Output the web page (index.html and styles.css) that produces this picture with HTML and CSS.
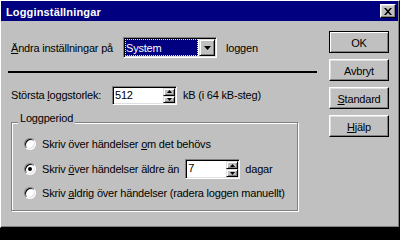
FILE: index.html
```html
<!DOCTYPE html>
<html lang="sv">
<head>
<meta charset="utf-8">
<title>Logginställningar</title>
<link rel="stylesheet" href="styles.css">
</head>
<body>
<div class="window">
  <div class="titlebar">
    <span class="title">Logginställningar</span>
    <span class="close"><svg width="8" height="7" viewBox="0 0 8 7"><path d="M0 0h2l2 2.3 2-2.3h2L5 3.5 8 7H6L4 4.7 2 7H0l3-3.5z"/></svg></span>
  </div>
  <div class="content">
    <div class="main">
      <div class="row">
        <span class="lbl lbl-log"><u>Ä</u>ndra inställningar på</span>
        <div class="combo">
          <div class="combo-value"><span>System</span></div>
          <div class="combo-btn"><svg width="7" height="4" viewBox="0 0 7 4"><path d="M0 0h7L3.5 4z"/></svg></div>
        </div>
        <span class="after after-log">loggen</span>
      </div>
      <div class="sep"></div>
      <div class="row">
        <span class="lbl lbl-size">Största <u>l</u>oggstorlek:</span>
        <div class="spin spin-size">
          <span class="spin-value">512</span>
          <div class="spin-btns">
            <span class="spin-btn"><svg width="5" height="3" viewBox="0 0 5 3"><path d="M2.5 0L5 3H0z"/></svg></span>
            <span class="spin-btn"><svg width="5" height="3" viewBox="0 0 5 3"><path d="M0 0h5L2.5 3z"/></svg></span>
          </div>
        </div>
        <span class="after after-size">kB (i 64 kB-steg)</span>
      </div>
      <fieldset class="group">
        <legend>Loggperiod</legend>
        <div class="opt"><span class="radio"></span><span>Skriv över händelser <u>o</u>m det behövs</span></div>
        <div class="opt opt-days">
          <span class="radio checked"></span><span>Skriv <u>ö</u>ver händelser äldre än</span>
          <div class="spin spin-days">
            <span class="spin-value">7</span>
            <div class="spin-btns">
              <span class="spin-btn"><svg width="5" height="3" viewBox="0 0 5 3"><path d="M2.5 0L5 3H0z"/></svg></span>
              <span class="spin-btn"><svg width="5" height="3" viewBox="0 0 5 3"><path d="M0 0h5L2.5 3z"/></svg></span>
            </div>
          </div>
          <span class="after after-days">dagar</span>
        </div>
        <div class="opt"><span class="radio"></span><span>Skriv <u>a</u>ldrig över händelser (radera loggen manuellt)</span></div>
      </fieldset>
    </div>
    <div class="buttons">
      <div class="btn default">OK</div>
      <div class="btn">Avbryt</div>
      <div class="btn"><span><u>S</u>tandard</span></div>
      <div class="btn"><span><u>H</u>jälp</span></div>
    </div>
  </div>
</div>
</body>
</html>
```
FILE: styles.css
```css
* { box-sizing: border-box; }
html, body { margin: 0; padding: 0; }
body {
  width: 400px;
  height: 230px;
  overflow: hidden;
  background: #000;
  color: #000;
  font: 11px/13px "Liberation Sans", Arial, sans-serif;
  letter-spacing: -0.2px;
}
u { text-underline-offset: 1px; }

.window {
  width: 400px;
  height: 228px;
  background: #c0c0c0;
  border: 1px solid;
  border-color: #fff #000 #000 #fff;
  box-shadow: inset -1px -1px #808080;
  padding: 0 1px 1px 0;
  display: flex;
  flex-direction: column;
}

.titlebar {
  height: 20px;
  flex: none;
  background: #000080;
  color: #fff;
  display: flex;
  align-items: center;
  justify-content: space-between;
  padding: 0 2px 0 5px;
}
.title { font-weight: bold; letter-spacing: 0.15px; margin-top: 2px; }
.close {
  width: 16px;
  height: 14px;
  background: #c0c0c0;
  border: 1px solid;
  border-color: #fff #000 #000 #fff;
  box-shadow: inset -1px -1px #808080, inset 1px 1px #dfdfdf;
  display: flex;
  align-items: center;
  justify-content: center;
  padding-top: 1px;
}
.close svg { display: block; }

.content { flex: 1; display: flex; }
.main { flex: 1; padding: 16px 0 0 10px; }

.row { display: flex; align-items: baseline; }
.lbl { flex: none; }
.lbl-log { width: 112px; }
.lbl-size { width: 101px; }
.after-log { margin-left: 9px; }
.after-size { margin-left: 6px; }
.after-days { margin-left: 5px; }

.combo, .spin {
  display: flex;
  background: #fff;
  border: 1px solid;
  border-color: #808080 #fff #fff #808080;
  box-shadow: inset 1px 1px #000, inset -1px -1px #dfdfdf;
  padding: 1px;
}
.combo { width: 94px; height: 21px; gap: 1px; }
.combo-value {
  flex: 1;
  background: #000080;
  color: #fff;
  border: 1px dotted #e8e8c0;
  padding-top: 2px;
}
.combo-btn, .spin-btn {
  background: #c0c0c0;
  border: 1px solid;
  border-color: #dfdfdf #000 #000 #dfdfdf;
  box-shadow: inset 1px 1px #fff, inset -1px -1px #808080;
  display: flex;
  align-items: center;
  justify-content: center;
}
.combo-btn { width: 16px; }
.combo-btn svg, .spin-btn svg { display: block; }

.spin-size { width: 65px; height: 19px; }
.spin-days { width: 55px; height: 20px; margin-left: 6px; }
.spin-value { flex: 1; padding: 1px 0 0 1px; }
.spin-btns { width: 12px; display: flex; flex-direction: column; }
.spin-btn { flex: 1; }

.sep {
  width: 309px;
  height: 2px;
  background: #000;
  margin: 13px 0 13px -3px;
}

.group {
  width: 287px;
  margin: 7px 0 0 0;
  padding: 2px 0 7px 0;
  min-width: 0;
  border: 1px solid #808080;
  box-shadow: inset 1px 1px #fff, 1px 1px #fff;
}
.group legend {
  margin-left: 6px;
  padding: 0 2px 7px;
  line-height: 13px;
  background: #c0c0c0;
}
.opt {
  display: flex;
  align-items: center;
  height: 20px;
  padding-left: 12px;
}
.opt + .opt { margin-top: 4px; }
.opt.opt-days { margin-top: 5px; }
.radio {
  flex: none;
  width: 12px;
  height: 12px;
  margin-right: 6px;
  border-radius: 50%;
  background: #fff;
  border: 1px solid;
  border-color: #808080 #fff #fff #808080;
  box-shadow: inset 1px 1px #000, inset -1px -1px #dfdfdf;
  display: flex;
  align-items: center;
  justify-content: center;
}
.radio.checked::after {
  content: "";
  width: 4px;
  height: 4px;
  border-radius: 50%;
  background: #000;
}

.buttons {
  width: 60px;
  margin: 10px 9px 0 0;
  display: flex;
  flex-direction: column;
  gap: 6px;
}
.btn {
  height: 22px;
  background: #c0c0c0;
  border: 1px solid;
  border-color: #fff #000 #000 #fff;
  box-shadow: inset -1px -1px #808080, inset 1px 1px #dfdfdf;
  display: flex;
  align-items: center;
  justify-content: center;
  padding-top: 2px;
}
.btn.default {
  border-color: #000;
  box-shadow: inset 1px 1px #fff, inset -1px -1px #808080;
}
```
